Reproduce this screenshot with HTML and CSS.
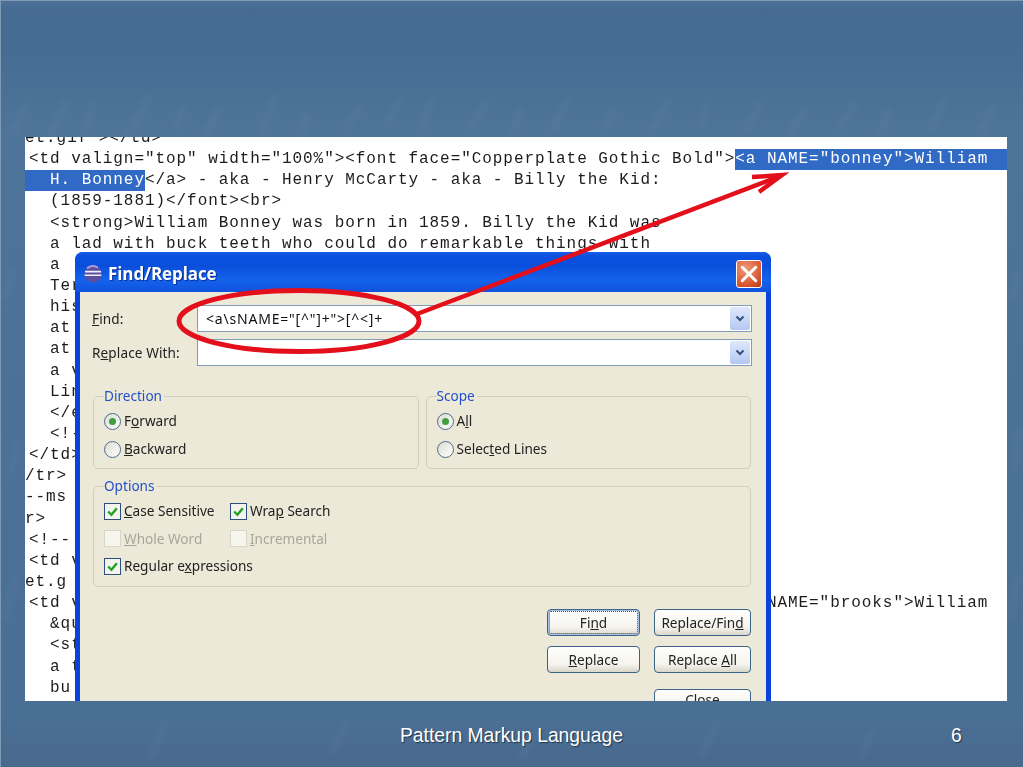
FILE: index.html
```html
<!DOCTYPE html>
<html lang="en">
<head>
<meta charset="utf-8">
<title>Pattern Markup Language</title>
<link rel="stylesheet" href="styles.css">
</head>
<body>
<div class="slide">
  <svg class="texture" viewBox="0 0 1023 767" aria-hidden="true">
    <defs><filter id="soft"><feGaussianBlur stdDeviation="3"/></filter></defs>
    <g filter="url(#soft)" stroke="#7c9cbb" stroke-width="3" fill="none" opacity=".22">
      <path d="M12 135l14-32M50 135l18-36M85 132l10-30M128 135l22-40M176 130l8-26M205 135l15-28M262 132l14-38M300 135l8-22M345 130l16-24M385 128l15-30M420 135l12-36M470 130l18-30M512 134l10-26M552 132l16-34M604 130l12-22M650 134l20-36M700 128l8-24M745 132l16-30M790 135l14-26M838 130l18-28M880 134l10-26M930 130l16-32M980 134l14-30"/>
      <path d="M5 300l9-30M10 480l8-40M6 620l10-46M1012 300l7-30M1014 470l6-40M1010 620l8-46"/>
      <path d="M150 760l16-40M330 755l18-34M520 762l14-30M700 758l18-36M860 760l12-30"/>
    </g>
  </svg>
  <main class="shot">
    <div class="code">
      <div class="line cut">et.gif"&gt;&lt;/td&gt;</div>
      <div class="line">&lt;td valign="top" width="100%"&gt;&lt;font face="Copperplate Gothic Bold"&gt;<span class="sel fill">&lt;a NAME="bonney"&gt;William</span></div>
      <div class="line"><span class="sel lead">  H. Bonney</span>&lt;/a&gt; - aka - Henry McCarty - aka - Billy the Kid:</div>
      <div class="line">  (1859-1881)&lt;/font&gt;&lt;br&gt;</div>
      <div class="line">  &lt;strong&gt;William Bonney was born in 1859. Billy the Kid was</div>
      <div class="line">  a lad with buck teeth who could do remarkable things with</div>
      <div class="line">  a</div>
      <div class="line">  Ter</div>
      <div class="line">  his</div>
      <div class="line">  at</div>
      <div class="line">  at</div>
      <div class="line">  a v</div>
      <div class="line">  Lin</div>
      <div class="line">  &lt;/e</div>
      <div class="line">  &lt;!-</div>
      <div class="line">&lt;/td&gt;</div>
      <div class="line cut">/tr&gt;</div>
      <div class="line cut">--ms</div>
      <div class="line cut">r&gt;</div>
      <div class="line">&lt;!--</div>
      <div class="line">&lt;td v</div>
      <div class="line cut">et.g</div>
      <div class="line">&lt;td valign="top" width="100%"&gt;&lt;font face="Copperplate Gothic Bold"&gt;&lt;a NAME="brooks"&gt;William</div>
      <div class="line">  &amp;qu</div>
      <div class="line">  &lt;st</div>
      <div class="line">  a t</div>
      <div class="line">  bu</div>
    </div>

    <section class="dialog">
      <header class="titlebar">
        <svg class="appicon" viewBox="0 0 18 18" aria-hidden="true">
          <circle cx="9" cy="9" r="8.5" fill="#5d4f9e"/>
          <path d="M1 6.6h16M.6 10.2h16.8" stroke="#eef" stroke-width="1.6"/>
          <path d="M3 3.5A8 8 0 0 1 14 2.8" stroke="#a89bd8" stroke-width="2" fill="none"/>
        </svg>
        <h1 class="title">Find/Replace</h1>
        <button class="close" aria-label="Close">
          <svg viewBox="0 0 16 16" aria-hidden="true"><path d="M2 2l12 12M14 2L2 14" stroke="#fff" stroke-width="2.6" stroke-linecap="round"/></svg>
        </button>
      </header>
      <div class="body">
        <div class="fields">
          <div class="field">
            <span class="flabel"><u>F</u>ind:</span>
            <div class="combo"><span class="value">&lt;a\sNAME="[^"]+"&gt;[^&lt;]+</span><span class="drop"><svg viewBox="0 0 10 8" aria-hidden="true"><path d="M1.5 1.5L5 5l3.5-3.5" fill="none" stroke="#33507f" stroke-width="2"/></svg></span></div>
          </div>
          <div class="field">
            <span class="flabel">R<u>e</u>place With:</span>
            <div class="combo"><span class="value"></span><span class="drop"><svg viewBox="0 0 10 8" aria-hidden="true"><path d="M1.5 1.5L5 5l3.5-3.5" fill="none" stroke="#33507f" stroke-width="2"/></svg></span></div>
          </div>
        </div>

        <div class="groups">
          <fieldset class="group half">
            <legend>Direction</legend>
            <label class="opt"><span class="radio on"></span><span>F<u>o</u>rward</span></label>
            <label class="opt"><span class="radio"></span><span><u>B</u>ackward</span></label>
          </fieldset>
          <fieldset class="group half">
            <legend>Scope</legend>
            <label class="opt"><span class="radio on"></span><span>A<u>l</u>l</span></label>
            <label class="opt"><span class="radio"></span><span>Selec<u>t</u>ed Lines</span></label>
          </fieldset>
        </div>

        <fieldset class="group options">
          <legend>Options</legend>
          <div class="optgrid">
            <label class="opt"><span class="check"><svg viewBox="0 0 12 12" aria-hidden="true"><path d="M2 6l3 3 5-6" fill="none" stroke="#21a121" stroke-width="2.2"/></svg></span><span><u>C</u>ase Sensitive</span></label>
            <label class="opt"><span class="check"><svg viewBox="0 0 12 12" aria-hidden="true"><path d="M2 6l3 3 5-6" fill="none" stroke="#21a121" stroke-width="2.2"/></svg></span><span>Wra<u>p</u> Search</span></label>
            <label class="opt off"><span class="check"></span><span><u>W</u>hole Word</span></label>
            <label class="opt off"><span class="check"></span><span><u>I</u>ncremental</span></label>
            <label class="opt"><span class="check"><svg viewBox="0 0 12 12" aria-hidden="true"><path d="M2 6l3 3 5-6" fill="none" stroke="#21a121" stroke-width="2.2"/></svg></span><span>Regular e<u>x</u>pressions</span></label>
          </div>
        </fieldset>

        <div class="buttons">
          <button class="btn primary">Fi<u>n</u>d</button>
          <button class="btn">Replace/Fin<u>d</u></button>
          <button class="btn"><u>R</u>eplace</button>
          <button class="btn">Replace <u>A</u>ll</button>
          <span></span>
          <button class="btn closebtn">Close</button>
        </div>
      </div>
    </section>
  </main>

  <svg class="marks" viewBox="0 0 1023 767" aria-hidden="true">
    <ellipse cx="299" cy="321" rx="120" ry="30.5" fill="none" stroke="#e3101c" stroke-width="5"/>
    <path d="M417 314L778 177" fill="none" stroke="#e3101c" stroke-width="4.5"/>
    <path d="M752 177L782 175L759 192" fill="none" stroke="#e3101c" stroke-width="4.5"/>
  </svg>

  <footer class="foot">
    <span class="foot-title">Pattern Markup Language</span>
    <span class="foot-num">6</span>
  </footer>
</div>
</body>
</html>
```
FILE: styles.css
```css
* { box-sizing: border-box; }
html, body { margin: 0; padding: 0; }
body { width: 1023px; height: 767px; overflow: hidden; background: #4a6f95; }

.slide {
  position: relative;
  width: 1023px;
  height: 767px;
  padding: 137px 16px 0 25px;
  overflow: hidden;
  background: linear-gradient(180deg, #4d7198 0, #466b92 10px, #476d94 60px, #4f7499 130px, #4c7197 400px, #4a6f94 720px, #49698d 767px);
  box-shadow: inset 1px 1px 0 #7f9ab6;
}
.texture { position: absolute; inset: 0; width: 1023px; height: 767px; }
.marks { position: absolute; inset: 0; width: 1023px; height: 767px; pointer-events: none; filter: blur(.3px); }

.shot {
  position: relative;
  width: 982px;
  height: 564px;
  overflow: hidden;
  background: #fff;
}
.code {
  margin-top: -9px;
  padding-left: 4px;
  font: 16px/21.15px "Liberation Mono", "Courier New", monospace;
  letter-spacing: .94px;
  color: #1c1c1c;
  filter: blur(.35px);
}
.line { display: flex; height: 21.15px; white-space: pre; }
.cut { margin-left: -4px; }
.sel { background: #316ac5; color: #fff; }
.fill { flex: 1; margin-right: -8px; }
.lead { margin-left: -4px; padding-left: 4px; }

.dialog {
  position: absolute;
  left: 50px;
  top: 115px;
  width: 696px;
  height: 600px;
  padding: 0 5px;
  background: #0a43dc;
  border-radius: 8px 8px 0 0;
  font: 13.6px/20px "Noto Sans", "Open Sans", sans-serif;
  color: #222;
  filter: blur(.3px);
}
.titlebar {
  display: flex;
  align-items: center;
  height: 40px;
  margin: 0 -5px;
  padding: 3px 9px 0 9px;
  border-radius: 8px 8px 0 0;
  background: linear-gradient(180deg, #1a5ee8 0, #0a50e0 4px, #0a4fdc 14px, #1463ec 28px, #0f52dd 40px);
}
.appicon { width: 18px; height: 18px; flex: none; }
.title {
  margin: 0 0 0 6px;
  flex: 1;
  font: bold 17px/20px "Open Sans", "Noto Sans", sans-serif;
  letter-spacing: -.1px;
  color: #fff;
  text-shadow: 1px 1px 1px #0a2a90;
}
.close {
  display: flex;
  align-items: center;
  justify-content: center;
  width: 26px;
  height: 28px;
  padding: 0;
  border: 1px solid #fff;
  border-radius: 3px;
  background: radial-gradient(circle at 35% 30%, #ee9a7c, #d8532c 70%, #b53a1a);
}
.close svg { width: 18px; height: 18px; }

.body {
  height: 560px;
  padding: 13px 15px 0 13px;
  background: #ece9d8;
}
.fields { display: flex; flex-direction: column; gap: 7px; margin: 0 -1px 0 -1px; }
.field { display: flex; align-items: center; }
.flabel { width: 105px; flex: none; padding-top: 1px; letter-spacing: .1px; }
.combo {
  display: flex;
  align-items: center;
  justify-content: space-between;
  flex: 1;
  height: 27px;
  padding: 1px 1px 1px 8px;
  border: 1px solid #7f9db9;
  background: #fff;
}
.value { font-size: 14px; letter-spacing: .8px; color: #111; }
.drop {
  display: flex;
  align-items: center;
  justify-content: center;
  width: 20px;
  height: 23px;
  border-radius: 2px;
  background: linear-gradient(180deg, #dfe8fb, #b4c8f2);
}
.drop svg { width: 10px; height: 8px; }

.groups { display: flex; gap: 7px; margin-top: 20px; }
.group {
  margin: 0;
  padding: 0 10px;
  border: 1px solid #d0d0bf;
  border-radius: 5px;
  min-width: 0;
}
.group legend {
  margin-left: 0;
  padding: 0 2px 0 0;
  color: #2350c8;
  line-height: 20px;
}
.half { flex: 1; height: 83px; padding-top: 5px; display: flex; flex-direction: column; gap: 8px; }
.opt { display: flex; align-items: center; gap: 3px; height: 20px; white-space: nowrap; }
.off { color: #a8a698; }

.radio {
  position: relative;
  width: 17px;
  height: 17px;
  flex: none;
  border: 1px solid #4d6a8b;
  border-radius: 50%;
  background: linear-gradient(135deg, #dcdcd2, #fff);
}
.radio.on::after {
  content: "";
  position: absolute;
  left: 4px;
  top: 4px;
  width: 7px;
  height: 7px;
  border-radius: 50%;
  background: #3f9f3f;
}
.check {
  display: flex;
  align-items: center;
  justify-content: center;
  width: 17px;
  height: 17px;
  flex: none;
  border: 1px solid #2f4f80;
  background: #f4f4ee;
}
.check svg { width: 13px; height: 13px; }
.off .check { border-color: #d8d6c6; background: #f6f5ee; }

.options { height: 111px; margin-top: 7px; padding-top: 5px; }
.optgrid {
  display: grid;
  grid-template-columns: 126px 1fr;
  row-gap: 7.5px;
}

.buttons {
  display: grid;
  grid-template-columns: 93px 97px;
  column-gap: 14px;
  row-gap: 10px;
  justify-content: end;
  margin-top: 22px;
  grid-auto-rows: 27px;
}
.buttons > span { display: block; }
.btn {
  padding: 0;
  border: 1px solid #3c6487;
  border-radius: 4px;
  background: linear-gradient(180deg, #fff, #f4f3ec 70%, #d9d6ca);
  font: 13.6px/20px "Noto Sans", "Open Sans", sans-serif;
  color: #222;
}
.primary { box-shadow: inset 0 0 0 1px #a8c0e8; outline: 1px dotted #444; outline-offset: -3px; }
.closebtn { margin-top: 6px; }

.foot {
  position: relative;
  display: flex;
  align-items: center;
  height: 66px;
  padding-top: 4px;
  padding-left: 375px;
  font: 19.3px/22px "Liberation Sans", Arial, sans-serif;
  color: #fff;
  text-shadow: 1px 1px 1px #1e3550;
}
.foot-title { width: 551px; }
.foot-num { display: block; }
```
